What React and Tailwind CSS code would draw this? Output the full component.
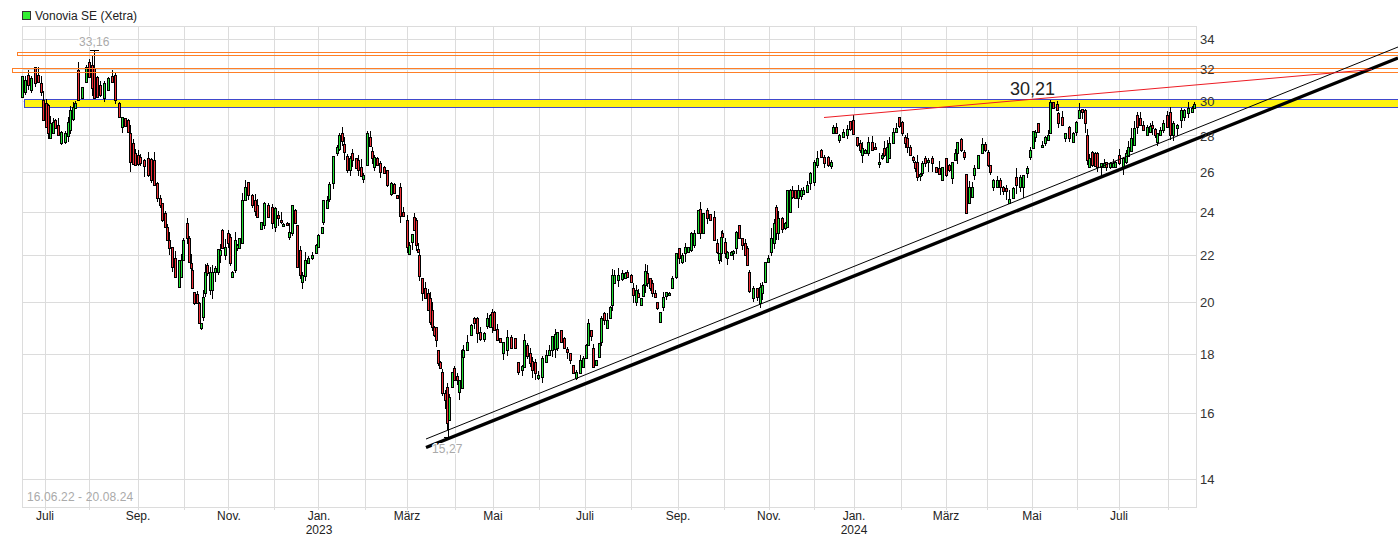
import React from "react";

// [x, top, bottom] of the candle bodies, read off the picture in page pixels
const bodies = [
  [22,76,97],[25,80,92],[28,75,85],[31,78,90],[35,67,83],[38,75,82],[41,83,92],[43,100,120],[48,105,133],[50,123,138],[55,120,128],[58,125,135],[61,132,143],[65,133,142],
  [70,110,130],[75,103,108],[78,70,100],[82,87,98],[86,67,82],[89,62,77],[94,68,98],[100,85,95],[104,83,98],[108,78,90],[112,76,82],[115,75,100],[119,103,117],[122,117,127],[125,118,126],[128,120,132],
  [130,133,162],[135,153,165],[140,157,163],[144,160,166],[148,158,175],[154,160,185],[157,183,198],[160,198,205],[162,203,220],[165,213,227],[167,227,240],[169,240,248],[172,247,267],[175,258,277],[179,260,287],[181,260,277],
  [183,240,260],[187,223,238],[189,238,262],[191,263,268],[192,270,288],[194,292,303],[197,294,303],[199,303,323],[201,323,328],[203,297,317],[205,272,293],[207,265,273],[210,272,290],[212,272,290],[215,268,272],
  [218,249,272],[220,250,255],[222,230,248],[225,247,255],[228,233,243],[230,237,263],[232,272,277],[235,240,270],[237,245,248],[239,238,248],[242,200,243],[245,187,200],[248,182,195],[252,195,205],
  [257,205,217],[261,222,229],[264,203,225],[268,205,217],[272,207,223],[275,208,227],[278,215,218],[283,224,226],[287,223,225],[289,232,237],[292,205,233],[295,210,223],[297,225,267],[302,275,282],[305,260,276],[308,258,263],[312,255,258],
  [316,245,253],[318,235,247],[322,227,233],[323,200,222],[327,200,208],[329,184,199],[333,156,183],[337,147,153],[339,135,149],[342,133,141],[344,144,152],[347,156,170],[350,158,170],[352,153,160],[356,158,168],[358,160,170],[361,167,176],[363,175,179],
  [367,133,165],[370,137,146],[372,151,158],[374,157,167],[377,158,165],[380,163,172],[384,167,173],[387,170,185],[391,183,194],[394,184,193],[397,195,198],[400,187,216],[403,212,216],[407,220,247],[409,245,254],[412,234,242],[414,217,230],[416,220,245],
  [418,249,252],[419,255,276],[422,278,293],[425,288,298],[430,298,322],[432,310,327],[434,327,335],[436,327,340],[438,350,363],[440,362,368],[442,372,393],[445,393,400],[447,387,423],[449,397,420],[452,372,387],[454,368,380],[457,376,380],[459,380,392],
  [462,350,388],[463,350,357],[467,342,350],[471,325,335],[474,318,323],[477,318,333],[480,332,339],[484,333,339],[487,318,326],[492,312,327],[494,312,330],[497,329,340],[500,338,342],[503,342,353],[507,337,350],[511,337,348],[515,338,348],
  [518,362,372],[522,366,370],[524,340,367],[527,345,356],[532,361,370],[535,362,373],[538,375,378],[542,358,377],[546,355,362],[549,350,355],[552,336,350],[557,332,348],[561,330,342],[564,338,348],[567,349,352],[570,353,360],[573,365,373],[576,372,378],
  [580,360,373],[583,358,367],[586,345,358],[588,323,345],[591,330,336],[593,348,367],[596,360,365],[599,343,357],[601,318,342],[604,313,320],[607,320,328],[610,307,318],[612,275,305],[614,275,283],[618,275,280],[622,273,279],[627,272,277],[631,275,282],
  [633,288,295],[636,290,302],[638,293,297],[641,298,305],[643,285,296],[645,271,285],[647,273,283],[652,283,293],[655,293,297],[657,302,308],[660,312,322],[663,297,307],[666,292,296],[669,293,295],[672,278,288],[676,253,277],[679,248,258],[682,255,262],[685,247,253],[688,247,252],
  [691,233,250],[694,233,245],[698,210,233],[700,209,233],[703,213,233],[707,210,218],[710,214,220],[714,217,240],[717,243,252],[719,253,260],[721,237,253],[722,233,237],[725,242,253],[727,252,258],[731,252,255],[733,251,253],[736,232,248],[739,225,238],[742,238,245],[747,248,265],
  [749,272,291],[753,288,298],[757,288,297],[760,287,303],[762,285,293],[765,262,282],[768,258,262],[771,238,252],[776,207,233],[778,218,233],[782,218,229],[785,223,228],[787,190,227],[792,190,197],[798,190,198],[803,190,194],[807,185,192],[810,173,183],
  [814,162,182],[817,158,165],[821,150,157],[824,157,163],[828,157,165],[831,162,166],[833,127,133],[836,127,133],[839,135,140],[843,132,137],[847,129,135],[850,121,129],[853,120,134],[857,137,145],[862,148,155],[865,150,153],[868,142,153],[872,142,150],[875,147,149],
  [879,162,164],[882,155,158],[884,148,155],[887,147,162],[889,143,158],[893,132,143],[896,128,132],[899,117,126],[902,122,133],[905,137,143],[907,138,147],[910,147,155],[913,157,160],[915,162,168],[917,162,177],[920,174,176],[922,163,173],[925,158,163],[928,160,162],[932,158,163],
  [936,167,172],[939,168,174],[942,167,180],[946,158,175],[949,165,170],[952,162,178],[955,153,160],[957,142,153],[961,139,150],[964,152,157],[966,174,213],[969,187,203],[972,187,197],[974,168,175],[978,155,168],[982,144,153],[985,144,150],[988,152,165],[990,165,172],[993,180,187],
  [997,180,187],[1000,180,187],[1003,187,191],[1006,188,191],[1009,199,203],[1013,188,198],[1016,177,185],[1020,177,187],[1023,175,187],[1027,168,173],[1030,150,157],[1033,131,148],[1035,132,137],[1038,123,132],[1042,145,147],[1045,137,143],[1048,135,140],
  [1050,102,133],[1053,102,108],[1057,104,110],[1058,113,123],[1062,117,125],[1065,133,138],[1069,127,138],[1073,133,142],[1076,122,132],[1079,110,118],[1082,109,112],[1085,110,123],[1087,135,160],[1089,158,167],[1092,152,165],[1097,153,167],
  [1101,163,167],[1106,162,167],[1110,163,167],[1115,162,167],[1119,155,163],[1123,158,167],[1128,147,156],[1134,128,145],[1137,115,127],[1140,118,125],[1143,125,130],[1147,127,135],[1152,125,128],[1157,133,142],[1160,130,135],[1163,123,130],
  [1167,115,127],[1170,112,135],[1173,123,135],[1177,125,128],[1181,110,120],[1184,110,117],[1188,108,113],[1192,108,112],[1194,104,108],
];

// small fixed generator so the wicks stay the same on every load
let seed = 7;
const rnd = () => {
  seed = (seed * 16807) % 2147483647;
  return seed / 2147483647;
};

const buildCandles = () => {
  const out = [];
  bodies.forEach(([x, top, bottom], i) => {
    const next = bodies[i + 1];
    const mid = (top + bottom) / 2;
    const nextMid = next ? (next[1] + next[2]) / 2 : mid - 1;
    const add = (cx, t, b, up) => {
      out.push({ x: Math.round(cx), top: Math.round(t), bottom: Math.round(b), up, hi: Math.round(t - rnd() * rnd() * 11), lo: Math.round(b + rnd() * rnd() * 11) });
    };
    add(x, top, bottom, nextMid <= mid);
    // fill wide gaps with a short candle
    if (next && next[0] - x > 4) {
      add((x + next[0]) / 2, (top + next[1]) / 2, (bottom + next[2]) / 2, nextMid <= mid);
    }
  });
  return out;
};

const candles = buildCandles();

const priceLines = [39, 69, 101, 135, 172, 212, 255, 302, 354, 413, 479];
const priceLabels = [
  ["34", 44], ["32", 74], ["30", 106], ["28", 141], ["26", 177], ["24", 217], ["22", 260], ["20", 307], ["18", 359], ["16", 418], ["14", 484],
];
const timeLines = [45, 89, 138, 184, 228, 274, 318, 365, 407, 455, 493, 539, 585, 631, 678, 724, 769, 814, 854, 901, 946, 987, 1032, 1077, 1119, 1168];
const timeLabels = [
  ["Juli", 45], ["Sep.", 138], ["Nov.", 229], ["Jan.", 319], ["März", 407], ["Mai", 493], ["Juli", 585], ["Sep.", 678], ["Nov.", 769], ["Jan.", 854], ["März", 946], ["Mai", 1032], ["Juli", 1119],
];

const Candle = ({ c }) => (
  <g>
    <line x1={c.x + 0.5} x2={c.x + 0.5} y1={c.hi} y2={c.lo} stroke="#000" />
    <rect x={c.x - 0.5} y={c.top + 0.5} width={2} height={Math.max(c.bottom - c.top, 1)} fill={c.up ? "#22e034" : "#ee3038"} stroke="#000" />
  </g>
);

const App = () => {
  return (
    <div className="w-[1398px] h-[544px] overflow-hidden bg-white [font-family:'Liberation_Sans',Arial,sans-serif]">
      <div className="h-[26px] pl-[22px] pt-[5px] flex items-center gap-[4px] text-[12px] text-[#222]">
        <span className="w-[9px] h-[9px] bg-[#33ee33] border border-[#333]"></span>
        <span>Vonovia SE (Xetra)</span>
      </div>

      <svg width="1398" height="518" viewBox="0 26 1398 518" className="block">
        <g shapeRendering="crispEdges" stroke="#dcdcdc">
          <rect x="22.5" y="26.5" width="1174" height="481" fill="#fff" />
          {priceLines.map((y) => (
            <line key={y} x1="22" x2="1197" y1={y + 0.5} y2={y + 0.5} />
          ))}
          {timeLines.map((x) => (
            <line key={x} x1={x + 0.5} x2={x + 0.5} y1="26" y2="510" />
          ))}
        </g>

        <rect x="24.5" y="99.5" width="1380" height="8" fill="#fff200" fillOpacity="0.94" stroke="#3f48cc" shapeRendering="crispEdges" />

        <g shapeRendering="crispEdges">
          {candles.map((c, i) => (
            <Candle key={i} c={c} />
          ))}
          <path d="M94.5 50V68M90 50.5H99M448.5 423V437M444 437.5H453" stroke="#000" fill="none" />
        </g>

        <g fill="none" stroke="#ff7f27" shapeRendering="crispEdges">
          <rect x="17.5" y="52.5" width="1390" height="3" />
          <rect x="12.5" y="68.5" width="1395" height="4" />
        </g>

        <line x1="426" y1="439" x2="1398" y2="47" stroke="#000" strokeWidth="1" />
        <line x1="426" y1="447.5" x2="1398" y2="58" stroke="#000" strokeWidth="3.4" />
        <line x1="824" y1="117.5" x2="1372" y2="69.5" stroke="#ed1c24" strokeWidth="1" />

        <g fontSize="13" fill="#333">
          {priceLabels.map(([t, y]) => (
            <text key={t} x="1200" y={y}>{t}</text>
          ))}
        </g>
        <g fontSize="12" fill="#222" textAnchor="middle">
          {timeLabels.map(([t, x], i) => (
            <text key={i} x={x} y="520">{t}</text>
          ))}
          <text x="319" y="534">2023</text>
          <text x="854" y="534">2024</text>
        </g>

        <g fontSize="12" fill="#aaa" stroke="#fff" strokeWidth="2" paintOrder="stroke" letterSpacing="0.12">
          <text x="79" y="46">33,16</text>
          <text x="432" y="453">15,27</text>
          <text x="27" y="501" stroke="none">16.06.22 - 20.08.24</text>
        </g>
        <text x="1010" y="95" fontSize="18" fill="#222">30,21</text>
      </svg>
    </div>
  );
};

export default App;
